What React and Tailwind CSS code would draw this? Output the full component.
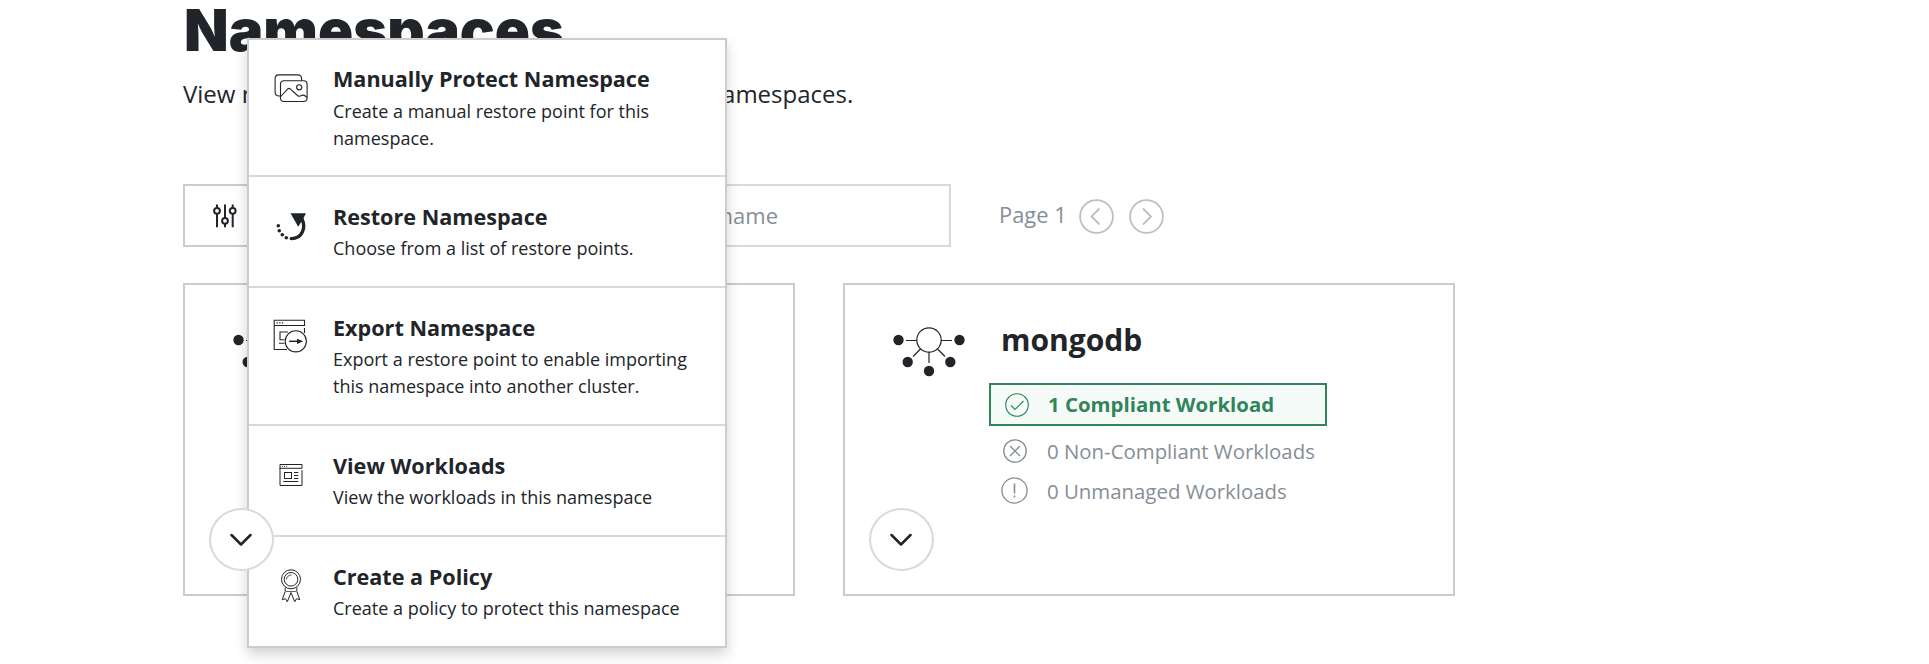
import React from "react";

const INK = "#212529";

function ImagesIcon() {
  return (
    <svg width="34" height="30" viewBox="0 0 34 30" fill="none" stroke={INK} strokeWidth="1.1">
      <path d="M6 22H4.500A3.700 3.700 0 0 1 1.100 18.300V4.500A3.700 3.700 0 0 1 4.500 .9H24A3.500 3.500 0 0 1 27.600 4.500V6.500" />
      <rect x="6.500" y="6.700" width="26.600" height="20.800" rx="3.500" />
      <circle cx="25.200" cy="13.300" r="2.600" />
      <path d="M6.800 22.500L13.500 15.200Q15 13.700 16.500 15.200L23.500 21.500Q25.500 23 27 21.700Q29.500 20.300 31.300 22L33 23.500" />
    </svg>
  );
}

function RestoreIcon() {
  return (
    <svg width="34" height="32" viewBox="0 0 34 32" fill={INK}>
      <path d="M16.500 2.300H32L28.500 9L24.200 15.700Z" />
      <path d="M28 8C32 16.500 28.500 27.700 17.200 27.600" fill="none" stroke={INK} strokeWidth="3.400" strokeLinecap="round" />
      <circle cx="4.300" cy="14.700" r="1.800" />
      <circle cx="5.300" cy="19.700" r="1.800" />
      <circle cx="8.300" cy="23.700" r="1.800" />
      <circle cx="12.300" cy="26.700" r="1.800" />
    </svg>
  );
}

function ExportIcon() {
  return (
    <svg width="36" height="36" viewBox="0 0 36 36" fill="none" stroke={INK} strokeWidth="1.100">
      <path d="M1.200 1.200H31.500V6.500H1.200ZM1.200 6.500V30.500H14M31.500 9V14" />
      <path d="M3.500 3.900h1.300M6.200 3.900h1.300M8.900 3.900h1.300" />
      <path d="M15 13H7V20.700H11.500M6 24.300H11.500" />
      <circle cx="22.800" cy="22.300" r="10.600" />
      <path d="M16.200 22.300H25" strokeWidth="1.500" />
      <path d="M24 19.700L30.200 22.300L24 24.900Z" fill={INK} stroke="none" />
    </svg>
  );
}

function WindowIcon() {
  return (
    <svg width="24" height="26" viewBox="0 0 24 26" fill="none" stroke={INK} strokeWidth="1">
      <path d="M1 1.500H23V5.300H1V22.500H23V7.200" />
      <path d="M1 1.500V6" />
      <path d="M2.800 3.300h1M5 3.300h1M7.200 3.300h1" />
      <rect x="5.500" y="9.500" width="7" height="6" />
      <path d="M15 9.500H19.300M15 12.500H19.300M15 15.500H19.300M4.300 18.500H19.300" />
    </svg>
  );
}

function RibbonIcon() {
  return (
    <svg width="22" height="36" viewBox="0 0 22 36" fill="none" stroke={INK} strokeWidth="1">
      <circle cx="11" cy="11.300" r="9.500" />
      <circle cx="11" cy="11.300" r="6.800" />
      <path d="M6.500 11.500A4.600 4.600 0 0 1 11.500 7" strokeWidth=".8" />
      <path d="M6 23.500H16" strokeWidth=".7" />
      <path d="M5.200 19.500V23.500L2.200 31.700L5.500 30.700L7.300 33.800L11 24.500L14.700 33.800L16.500 30.700L19.800 31.700L16.800 23.500V19.500" />
    </svg>
  );
}

function Tile({ name }) {
  return (
    <section className="relative flex h-[313px] w-[612px] border-2 border-[#cccccc] px-12 pt-[41px]">
      <svg className="shrink-0" width="74" height="52" viewBox="2 0 74 52" fill="none" stroke={INK} strokeWidth="1.200">
        <circle cx="38" cy="14" r="12.200" />
        <path d="M15 14.500H26M50 14.500H61M29.500 23L22 30.500M46.500 23L54 30.500M38 26V37" />
        <g fill={INK} stroke="none">
          <circle cx="7.500" cy="14" r="5.200" />
          <circle cx="68.500" cy="14" r="5.200" />
          <circle cx="16.700" cy="36" r="5.200" />
          <circle cx="59.300" cy="36" r="5.200" />
          <circle cx="38" cy="45" r="5.200" />
        </g>
      </svg>
      {name && (
        <div className="ml-[22px] flex flex-col items-start">
          <h2 className="ml-3 mt-[-6px] text-[30px] font-bold leading-[40px]">{name}</h2>
          <div className="mt-[23px] flex h-[43px] w-[338px] items-center border-2 border-[#32845a] bg-[#f5fbf9] pl-3.5 text-[20.4px] font-bold text-[#32845a]">
            <svg width="24" height="24" viewBox="0 0 24 24" fill="none" stroke="currentColor" strokeWidth="1.100">
              <circle cx="12" cy="12" r="11.300" />
              <path d="M6 12.500L10 16.500L18.500 8" />
            </svg>
            <span className="ml-[19px]">1 Compliant Workload</span>
          </div>
          <div className="mt-[5px] flex h-10 items-center pl-3.5 text-[20.4px] text-[#868e96]">
            <svg width="24" height="24" viewBox="0 0 24 24" fill="none" stroke="currentColor" strokeWidth="1.300">
              <circle cx="12" cy="12" r="11.200" />
              <path d="M7 7L17 17M17 7L7 17" />
            </svg>
            <span className="ml-5">0 Non-Compliant Workloads</span>
          </div>
          <div className="flex h-10 items-center pl-3 text-[20.4px] text-[#868e96]">
            <svg className="mt-[-2px]" width="27" height="27" viewBox="0 0 27 27" fill="none" stroke="currentColor" strokeWidth="1.300">
              <circle cx="13.500" cy="13.500" r="12.600" />
              <path d="M13.500 6.500V16.500M13.500 18.500V20.500" strokeWidth="1.600" />
            </svg>
            <span className="ml-[19px]">0 Unmanaged Workloads</span>
          </div>
        </div>
      )}
      <button className="absolute left-6 top-[223px] z-20 flex h-[63px] w-[65px] items-center justify-center rounded-[50%] border-2 border-[#d9d9d9] bg-white pr-px">
        <svg width="22" height="14" viewBox="0 0 22 14" fill="none" stroke={INK} strokeWidth="2.500" strokeLinecap="round" strokeLinejoin="round">
          <path d="M1.500 2L11 11.500L20.500 2" />
        </svg>
      </button>
    </section>
  );
}

function MenuItem({ icon, title, children, className, iconTop = "pt-[34px]", textTop = "pt-[24px]", gap = "mt-[2px]" }) {
  return (
    <li className={`flex border-[#d9d9d9] ${className}`}>
      <div className={`flex w-[84px] shrink-0 justify-center ${iconTop}`}>{icon}</div>
      <div className={textTop}>
        <h3 className="text-[21.6px] font-bold leading-[32px]">{title}</h3>
        <p className={`w-[370px] text-[18px] leading-[27px] ${gap}`}>{children}</p>
      </div>
    </li>
  );
}

export default function App() {
  return (
    <main className="h-[664px] overflow-hidden bg-white pl-[183px] font-['Open_Sans',sans-serif] text-[#212529]">
      <h1 className="ml-px h-[77px] whitespace-nowrap font-['Inter',sans-serif] text-[58px] font-black leading-[60px]">Namespaces</h1>
      <p className="h-[107px] whitespace-nowrap text-[24px] leading-[34px]">
        View <span className="[word-spacing:-3px]">namespace details and perform actions on </span>namespaces.
      </p>
      <div className="flex h-[63px] items-center">
        <button className="flex h-full w-[240px] items-center border-2 border-[#cccccc] pl-7">
          <svg width="24" height="26" viewBox="0 0 24 26" fill="none" stroke={INK} strokeWidth="2">
            <path d="M4 1.500V5M4 10.500V24.200M12 1.500V15M12 20.500V24.200M19.700 1.500V5M19.700 10.500V24.200" />
            <circle cx="4" cy="7.800" r="2.900" />
            <circle cx="12" cy="17.800" r="2.900" />
            <circle cx="19.700" cy="7.800" r="2.900" />
          </svg>
        </button>
        <div className="ml-6 flex h-full w-[504px] items-center border-2 border-[#d9d9d9] pl-[183px] text-[22px] text-[#868e96]">Filter by name</div>
        <span className="ml-12 w-[80px] whitespace-nowrap text-[21.9px] text-[#868e96]">Page 1</span>
        {["M20.500 9.500L12.500 17.500L20.500 25.500", "M14 9.500L22 17.500L14 25.500"].map((d) => (
          <svg key={d} className="mr-[15px] mt-px" width="35" height="35" viewBox="0 0 35 35" fill="none" stroke="#bfbfbf" strokeWidth="1.800">
            <circle cx="17.500" cy="17.500" r="16.400" />
            <path d={d} />
          </svg>
        ))}
      </div>
      <div className="relative mt-9 flex gap-12">
        <Tile />
        <Tile name="mongodb" />
        <ul className="absolute left-[64px] top-[-245px] z-10 h-[610px] w-[480px] border-2 border-[#cccccc] bg-white shadow-[0_6px_12px_rgba(0,0,0,0.18)]">
          <MenuItem className="h-[137px] border-b-2" textTop="pt-[23px]" gap="mt-[3px]" icon={<ImagesIcon />} title="Manually Protect Namespace">
            Create a manual restore point for this namespace.
          </MenuItem>
          <MenuItem className="h-[111px] border-b-2" icon={<RestoreIcon />} title="Restore Namespace">
            Choose from a list of restore points.
          </MenuItem>
          <MenuItem className="h-[138px] border-b-2" iconTop="pt-[31px]" icon={<ExportIcon />} title="Export Namespace">
            Export a restore point to enable importing this namespace into another cluster.
          </MenuItem>
          <MenuItem className="h-[111px] border-b-2" iconTop="pt-[37px]" icon={<WindowIcon />} title="View Workloads">
            View the workloads in this namespace
          </MenuItem>
          <MenuItem className="h-[109px]" iconTop="pt-[31px]" icon={<RibbonIcon />} title="Create a Policy">
            Create a policy to protect this namespace
          </MenuItem>
        </ul>
      </div>
    </main>
  );
}
